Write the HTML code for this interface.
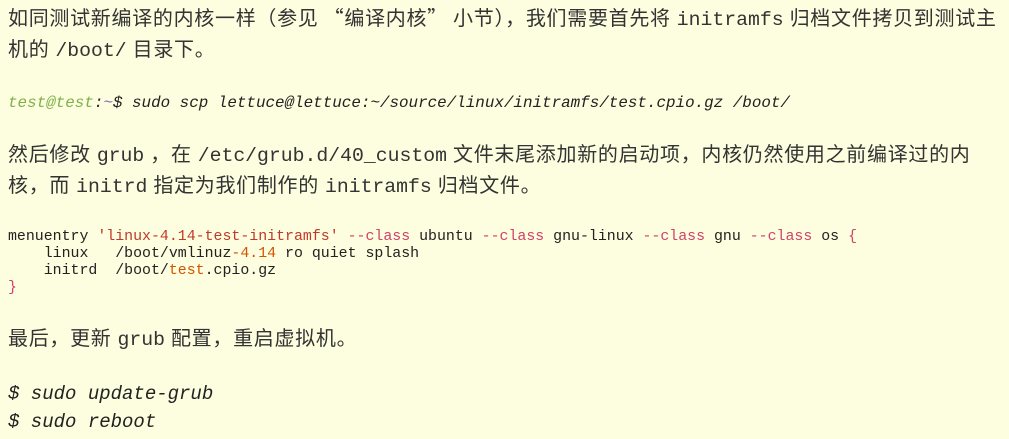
<!DOCTYPE html>
<html><head><meta charset="utf-8"><style>
html,body{margin:0;padding:0;width:1009px;height:439px;overflow:hidden;background:#fdfddf;}
.l{position:absolute;left:8px;white-space:pre;color:#333;}
.p{font-family:"Noto Sans CJK SC","Liberation Sans",sans-serif;font-size:20px;line-height:30px;letter-spacing:0.7px;}
.p code{font-family:"Liberation Mono",monospace;font-size:19.8px;margin:0 6px;letter-spacing:0;}
.m{font-family:"Liberation Mono",monospace;font-size:14.9px;line-height:17px;color:#222;}
.i{font-family:"Liberation Mono",monospace;font-style:italic;}
.s{color:#c0392b}.k{color:#d0436a}.o{color:#d35400}
</style></head><body>
<div class="l p" style="top:2px">如同测试新编译的内核一样（参见 “编译内核” 小节），我们需要首先将<code>initramfs</code>归档文件拷贝到测试主</div>
<div class="l p" style="top:33px">机的<code>/boot/</code>目录下。</div>
<div class="l i" style="top:93px;font-size:15.9px;line-height:20px;color:#222"><span style="color:#7fb24a">test@test</span>:<span style="color:#8a6ab0">~</span>$ sudo scp lettuce@lettuce:~/source/linux/initramfs/test.cpio.gz /boot/</div>
<div class="l p" style="top:138px">然后修改<code>grub</code>，在<code>/etc/grub.d/40_custom</code>文件末尾添加新的启动项，内核仍然使用之前编译过的内</div>
<div class="l p" style="top:169px">核，而<code>initrd</code>指定为我们制作的<code>initramfs</code>归档文件。</div>
<div class="l m" style="top:229px">menuentry <span class="s">'linux-4.14-test-initramfs'</span> <span class="k">--class</span> ubuntu <span class="k">--class</span> gnu-linux <span class="k">--class</span> gnu <span class="k">--class</span> os <span class="k">{</span>
    linux   /boot/vmlinuz<span class="o">-4.14</span> ro quiet splash
    initrd  /boot/<span class="o">test</span>.cpio.gz
<span class="k">}</span></div>
<div class="l p" style="top:322px">最后，更新<code>grub</code>配置，重启虚拟机。</div>
<div class="l i" style="top:380px;font-size:19px;line-height:28px;color:#222">$ sudo update-grub
$ sudo reboot</div>
</body></html>
